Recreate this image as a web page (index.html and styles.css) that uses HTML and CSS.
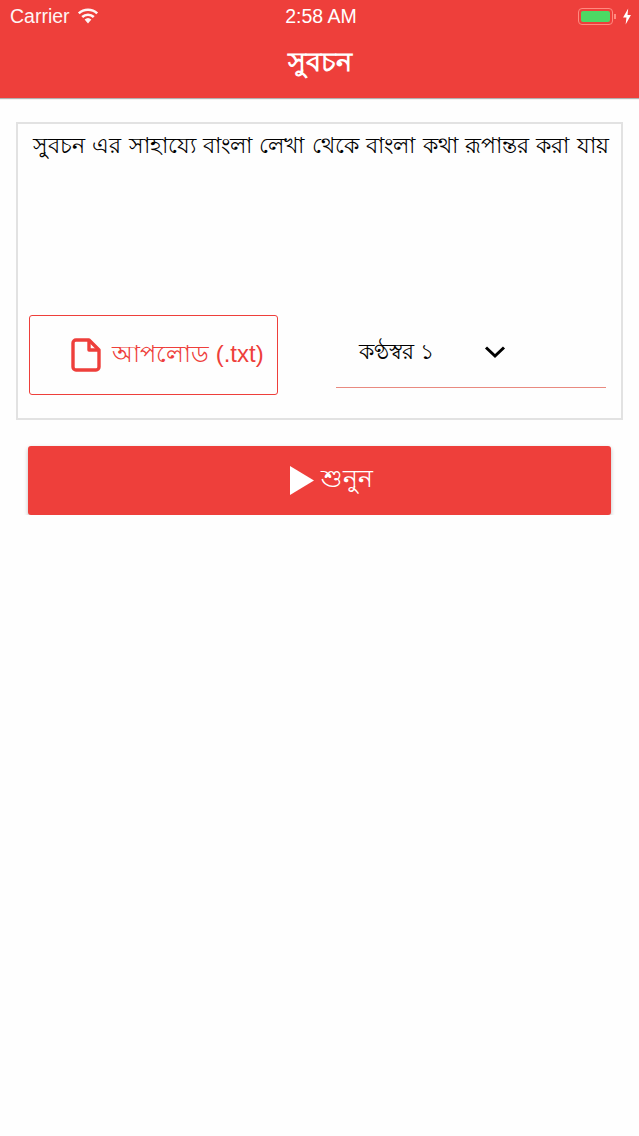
FILE: index.html
```html
<!DOCTYPE html>
<html lang="bn">
<head>
    <meta charset="UTF-8">
    <meta name="viewport" content="width=device-width, initial-scale=1.0">
    <title>সুবচন</title>
    <link rel="stylesheet" href="styles.css">
</head>
<body>

    <div class="header">
        <div class="status-bar">
            <div class="status-left">
                <span>Carrier</span>
                <svg class="wifi" width="22" height="16" viewBox="0 0 22 16">
                    <path d="M11 15.5 L7.6 11.6 A5 5 0 0 1 14.4 11.6 Z" fill="#fff"/>
                    <path d="M5.2 9 A8.4 8.4 0 0 1 16.8 9" fill="none" stroke="#fff" stroke-width="2.6"/>
                    <path d="M1.8 5.4 A13.4 13.4 0 0 1 20.2 5.4" fill="none" stroke="#fff" stroke-width="2.6"/>
                </svg>
            </div>
            <div class="status-time">2:58 AM</div>
            <div class="status-right">
                <div class="battery"><div class="battery-fill"></div></div>
                <div class="battery-cap"></div>
                <svg width="10" height="17" viewBox="0 0 9 16">
                    <path d="M5.6 0.5 L0.8 9 H4 L3.2 15.5 L8.2 6.6 H5 Z" fill="#fff"/>
                </svg>
            </div>
        </div>
        <h1>সুবচন</h1>
    </div>

    <div class="content">
        <div class="card">
            <p class="sample-text">সুবচন এর সাহায্যে বাংলা লেখা থেকে বাংলা কথা রূপান্তর করা যায়</p>
            <div class="controls">
                <div class="upload-button">
                    <svg width="30" height="34" viewBox="0 0 30 34">
                        <path d="M5 2 H18 L28 12 V29 A3 3 0 0 1 25 32 H5 A3 3 0 0 1 2 29 V5 A3 3 0 0 1 5 2 Z" fill="none" stroke="#ee3f3b" stroke-width="3.4" stroke-linejoin="round"/>
                        <path d="M18 2 V12 H28" fill="none" stroke="#ee3f3b" stroke-width="3.4" stroke-linejoin="round"/>
                    </svg>
                    <span>আপলোড (.txt)</span>
                </div>
                <div class="voice-select">
                    <span>কণ্ঠস্বর ১</span>
                    <svg width="22" height="14" viewBox="0 0 22 14">
                        <path d="M2 2.5 L11 11 L20 2.5" fill="none" stroke="#000" stroke-width="3"/>
                    </svg>
                </div>
            </div>
        </div>

        <div class="listen-button">
            <svg width="24" height="29" viewBox="0 0 24 29">
                <path d="M0 0 L24 14.5 L0 29 Z" fill="#fff"/>
            </svg>
            <span>শুনুন</span>
        </div>
    </div>

</body>
</html>
```

FILE: styles.css
```css
body {
    font-family: "Liberation Sans", "Noto Sans", sans-serif;
    margin: 0;
    padding: 0;
    background-color: #fefefe;
    color: #000;
}

.header {
    height: 98px;
    background-color: #ee3f3b;
    color: #fff;
    box-shadow: 0 1px 1px rgba(0, 0, 0, 0.3);
}

.status-bar {
    display: grid;
    grid-template-columns: 1fr auto 1fr;
    align-items: center;
    height: 32px;
    padding: 0 7px 0 10px;
    font-size: 19.5px;
}

.status-left {
    display: flex;
    align-items: center;
    gap: 7px;
    opacity: 0.95;
}

.status-right {
    display: flex;
    align-items: center;
    justify-content: flex-end;
}

.battery {
    width: 35px;
    height: 17px;
    box-sizing: border-box;
    padding: 2px;
    border: 1px solid #ff8a80;
    border-radius: 4px;
}

.battery-fill {
    width: 100%;
    height: 100%;
    background-color: #4cd964;
    border-radius: 2px;
}

.battery-cap {
    width: 2px;
    height: 5px;
    margin: 0 6px 0 1px;
    background-color: #ff8a80;
}

.header h1 {
    margin: 0;
    font-size: 27px;
    line-height: 60px;
    font-weight: bold;
    text-align: center;
}

.content {
    padding: 24px 16px 0;
}

.card {
    height: 298px;
    box-sizing: border-box;
    padding: 0 15px 0 11px;
    border: 2px solid #e2e2e2;
    display: flex;
    flex-direction: column;
    justify-content: space-between;
}

.sample-text {
    margin: 0;
    padding: 6px 0 0 4px;
    font-size: 22.2px;
    word-spacing: 1.2px;
    line-height: 32px;
    text-align: center;
    white-space: nowrap;
}

.controls {
    display: flex;
    align-items: flex-start;
    justify-content: space-between;
    margin-bottom: 23px;
}

.upload-button {
    width: 249px;
    height: 80px;
    box-sizing: border-box;
    padding-left: 41px;
    border: 1px solid #ee3f3b;
    border-radius: 3px;
    color: #ee3f3b;
    font-size: 24px;
    display: flex;
    align-items: center;
    gap: 11px;
    white-space: nowrap;
}

.voice-select {
    width: 270px;
    height: 73px;
    box-sizing: border-box;
    padding: 2px 100px 0 23px;
    border-bottom: 1px solid #e98a80;
    font-size: 22px;
    display: flex;
    align-items: center;
    justify-content: space-between;
    white-space: nowrap;
}

.listen-button {
    height: 69px;
    margin: 26px 12px 0;
    padding-left: 23px;
    background-color: #ee3f3b;
    border-radius: 3px;
    box-shadow: 0 2px 4px rgba(0, 0, 0, 0.25);
    color: #fff;
    font-size: 25px;
    display: flex;
    align-items: center;
    justify-content: center;
    gap: 7px;
}
```
